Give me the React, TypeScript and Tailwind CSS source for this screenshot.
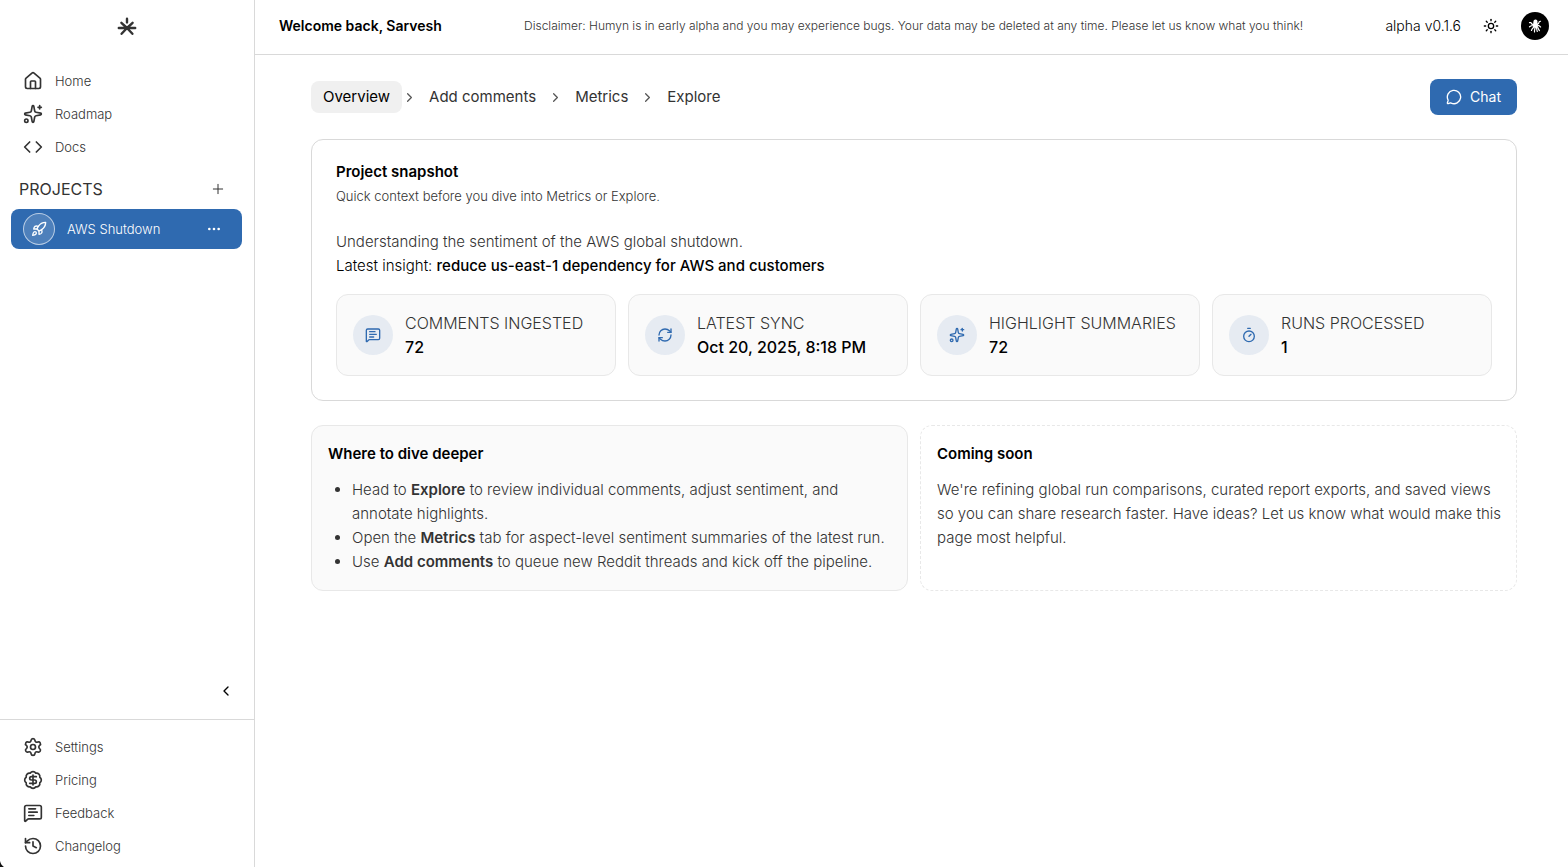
import type { ReactNode } from 'react';
import {
  BadgeDollarSign,
  ChevronLeft,
  ChevronRight,
  Code,
  Ellipsis,
  History,
  House,
  MessageCircle,
  MessageSquareText,
  Plus,
  RefreshCw,
  Rocket,
  Settings,
  Sparkles,
  Sun,
  Timer,
  type LucideIcon,
} from 'lucide-react';

interface NavItem {
  label: string;
  icon: LucideIcon;
}

interface Stat {
  label: string;
  value: string;
  icon: LucideIcon;
}

const MAIN_NAV: NavItem[] = [
  { label: 'Home', icon: House },
  { label: 'Roadmap', icon: Sparkles },
  { label: 'Docs', icon: Code },
];

const FOOTER_NAV: NavItem[] = [
  { label: 'Settings', icon: Settings },
  { label: 'Pricing', icon: BadgeDollarSign },
  { label: 'Feedback', icon: MessageSquareText },
  { label: 'Changelog', icon: History },
];

const TABS = ['Overview', 'Add comments', 'Metrics', 'Explore'];

const STATS: Stat[] = [
  { label: 'COMMENTS INGESTED', value: '72', icon: MessageSquareText },
  { label: 'LATEST SYNC', value: 'Oct 20, 2025, 8:18 PM', icon: RefreshCw },
  { label: 'HIGHLIGHT SUMMARIES', value: '72', icon: Sparkles },
  { label: 'RUNS PROCESSED', value: '1', icon: Timer },
];

function Logo() {
  return (
    <svg viewBox="0 0 20 20" className="size-5" fill="none" stroke="#333" strokeWidth="2.4" strokeLinecap="round">
      <path d="M10 1.800v3.600M1.800 11h16.400M10 11L4.400 5.800M10 11l5.600-5.200M10 11l-5.400 5.800M10 11l5.400 5.800" />
    </svg>
  );
}

function NavList({ items }: { items: NavItem[] }) {
  return (
    <ul className="flex flex-col">
      {items.map(({ label, icon: Icon }) => (
        <li key={label}>
          <a href="#" className="flex h-[33px] items-center gap-3 px-[23px] text-[13px] leading-5 font-light text-[#333]">
            <Icon className="size-5" strokeWidth={2} />
            {label}
          </a>
        </li>
      ))}
    </ul>
  );
}

function Sidebar() {
  return (
    <aside className="relative flex w-[255px] shrink-0 flex-col border-r border-[#d9d9d9]">
      <a href="#" aria-label="Humyn" className="flex h-[54px] items-center justify-center">
        <Logo />
      </a>
      <nav className="pt-[10px]">
        <NavList items={MAIN_NAV} />
      </nav>

      <div className="mt-2 flex h-9 items-center justify-between pr-7 pl-[19px]">
        <h2 className="text-base text-[#333]">PROJECTS</h2>
        <button type="button" aria-label="New project">
          <Plus className="size-4 text-[#333]" strokeWidth={1.5} />
        </button>
      </div>
      <div className="mt-0.5 mr-3 ml-[11px] flex h-10 items-center gap-3 rounded-lg bg-[#2f6ab0] pr-5 pl-3 text-white">
        <span className="flex size-8 items-center justify-center rounded-full border border-white/60 bg-white/15">
          <Rocket className="size-4" strokeWidth={2} />
        </span>
        <a href="#" className="flex-1 text-[13px] leading-5 font-light">AWS Shutdown</a>
        <button type="button" aria-label="Project options">
          <Ellipsis className="size-4" strokeWidth={2} />
        </button>
      </div>

      <div className="mt-auto flex justify-end pr-5 pb-5">
        <button type="button" aria-label="Collapse sidebar">
          <ChevronLeft className="size-4 text-black" strokeWidth={2} />
        </button>
      </div>
      <nav className="border-t border-[#d9d9d9] pt-[10px] pb-[5px]">
        <NavList items={FOOTER_NAV} />
      </nav>
      {/* rounded window corner */}
      <svg viewBox="0 0 4 6" className="absolute bottom-0 left-0 h-1.5 w-1" aria-hidden="true">
        <path d="M0 0C.6 2.600 1.800 4.600 4 6H0z" fill="#111" />
      </svg>
    </aside>
  );
}

function Avatar() {
  return (
    <button type="button" aria-label="Account" className="flex size-7 items-center justify-center rounded-full bg-black">
      <svg viewBox="0 0 28 28" className="size-7" fill="none" stroke="#fff" strokeLinecap="round" strokeLinejoin="round">
        <path d="M12.400 9.800c.2-1.800 1.300-2.600 2.500-2.300 1.500.4 1.900 1.900 1.500 3.500l.4 3.200-2.300 1.600-2.600-1.400z" fill="#fff" stroke="none" />
        <path
          strokeWidth="1.2"
          d="M13 12.500c-1.800.2-2.600-.6-3-1.800H8.500M13 13.500c-2 0-3.300.2-4.500 1.300M13.300 14.200c-.6 1.900-2.500 2-2.800 4.300M14.200 14.500c0 2-.9 3-.7 5.500M15 14.500c.9 1.800.6 3.200 1.300 5M15.700 14c1.600.9 1.200 3 2.700 4.500M16.200 13c1.500.4 2.700.6 3.400 2M16 12c1.500.2 2-1 2.200-2.200l1.300-.5"
        />
      </svg>
    </button>
  );
}

function TopBar() {
  return (
    <header className="flex h-[55px] shrink-0 items-center justify-between border-b border-[#d9d9d9] pr-[19px] pb-0.5 pl-6">
      <p className="text-sm font-semibold text-black">Welcome back, Sarvesh</p>
      <p className="text-xs font-light text-[#333]">
        Disclaimer: Humyn is in early alpha and you may experience bugs. Your data may be deleted at any time. Please let us know what you think!
      </p>
      <div className="flex items-center">
        <span className="text-sm font-light text-black">alpha v0.1.6</span>
        <button type="button" aria-label="Toggle theme" className="mr-[22px] ml-[22px]">
          <Sun className="size-4 text-black" strokeWidth={2} />
        </button>
        <Avatar />
      </div>
    </header>
  );
}

function Tabs() {
  return (
    <nav className="flex items-center">
      {TABS.map((tab, i) => (
        <div key={tab} className="flex items-center">
          {i > 0 && <ChevronRight className="size-[15px] text-[#555]" strokeWidth={2} />}
          <button
            type="button"
            className={
              i === 0
                ? 'h-8 rounded-lg bg-[#f0f0f0] px-3 text-[15px] leading-6 text-black'
                : 'h-8 rounded-lg px-3 text-[15px] leading-6 text-[#333]'
            }
          >
            {tab}
          </button>
        </div>
      ))}
    </nav>
  );
}

function StatCard({ label, value, icon: Icon }: Stat) {
  return (
    <div className="flex items-center gap-3 rounded-xl border border-[#e8e8e8] bg-[#fafafa] p-4">
      <span className="flex size-10 shrink-0 items-center justify-center rounded-full bg-[#e6ebf2]">
        <Icon className="size-4 text-[#2f6ab0]" strokeWidth={2} />
      </span>
      <dl className="text-base whitespace-nowrap">
        <dt className="font-light text-[#333]">{label}</dt>
        <dd className="font-medium text-black">{value}</dd>
      </dl>
    </div>
  );
}

function Snapshot() {
  return (
    <section className="rounded-xl border border-[#d9d9d9] p-6">
      <h2 className="text-[15px] leading-4 font-semibold text-black">Project snapshot</h2>
      <p className="mt-1.5 text-[13px] leading-5 font-light text-[#333]">
        Quick context before you dive into Metrics or Explore.
      </p>
      <p className="mt-6 text-[15px] leading-6 font-light text-[#333]">
        Understanding the sentiment of the AWS global shutdown.
      </p>
      <p className="text-[15px] leading-6 font-light text-black">
        Latest insight: <span className="font-medium">reduce us-east-1 dependency for AWS and customers</span>
      </p>
      <div className="mt-4 grid grid-cols-4 gap-3">
        {STATS.map((stat) => (
          <StatCard key={stat.label} {...stat} />
        ))}
      </div>
    </section>
  );
}

function Panel({ title, className, children }: { title: string; className: string; children: ReactNode }) {
  return (
    <section className={`rounded-xl border border-[#e8e8e8] py-4 pr-2 pl-4 ${className}`}>
      <h3 className="mb-3 text-[15px] leading-6 font-semibold text-black">{title}</h3>
      {children}
    </section>
  );
}

export default function App() {
  return (
    <div className="flex min-h-screen bg-white font-['Inter',sans-serif]">
      <Sidebar />
      <div className="flex min-w-0 flex-1 flex-col">
        <TopBar />
        <main className="flex flex-col gap-6 pt-6 pr-[51px] pl-14">
          <div className="flex items-center justify-between">
            <Tabs />
            <button
              type="button"
              className="flex h-9 items-center gap-2 rounded-lg bg-[#2f6ab0] px-4 text-sm text-white"
            >
              <MessageCircle className="size-4" strokeWidth={2} />
              Chat
            </button>
          </div>
          <Snapshot />
          <div className="grid grid-cols-2 gap-3">
            <Panel title="Where to dive deeper" className="bg-[#fafafa]">
              <ul className="list-disc pl-6 text-[15px] leading-6 font-light text-[#333]">
                <li>
                  Head to <strong className="font-semibold">Explore</strong> to review individual comments, adjust sentiment, and annotate highlights.
                </li>
                <li>
                  Open the <strong className="font-semibold">Metrics</strong> tab for aspect-level sentiment summaries of the latest run.
                </li>
                <li>
                  Use <strong className="font-semibold">Add comments</strong> to queue new Reddit threads and kick off the pipeline.
                </li>
              </ul>
            </Panel>
            <Panel title="Coming soon" className="border-dashed">
              <p className="text-[15px] leading-6 font-light text-[#333]">
                We're refining global run comparisons, curated report exports, and saved views so you can share research faster. Have ideas? Let us know what would make this page most helpful.
              </p>
            </Panel>
          </div>
        </main>
      </div>
    </div>
  );
}
